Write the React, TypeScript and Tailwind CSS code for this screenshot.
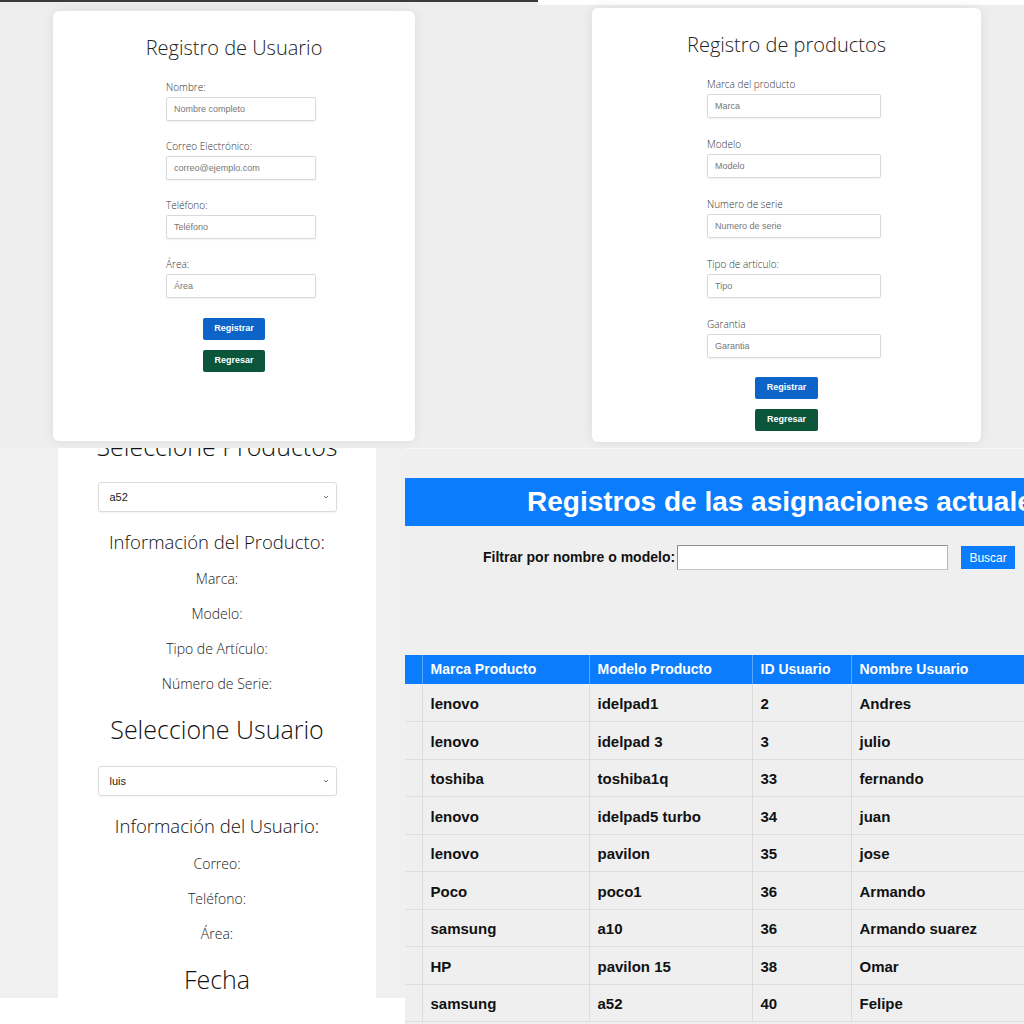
import React from "react";

const sans = { fontFamily: '"Open Sans", "Noto Sans", sans-serif' };
const arial = { fontFamily: '"Liberation Sans", Arial, sans-serif' };

function Field({ label, placeholder, width, first, gap }: { label: string; placeholder: string; width: string; first?: boolean; gap: string }) {
  return (
    <div className={first ? "" : gap}>
      <div className="h-[15px] text-[10px] leading-[15px] font-light text-[#333]" style={sans}>
        {label}
      </div>
      <input
        readOnly
        placeholder={placeholder}
        className={`mt-[2px] block h-[24px] ${width} rounded-[2px] border border-[#d9d9d9] bg-white px-[7px] text-[9px] text-[#333] placeholder:text-[#777] shadow-[0_1px_2px_rgba(0,0,0,0.06)] outline-none`}
        style={arial}
      />
    </div>
  );
}

function Buttons({ w }: { w: string }) {
  return (
    <div className="flex flex-col items-center">
      <button className={`h-[22px] ${w} rounded-[2px] bg-[#0c64c9] text-[9px] font-bold text-white`} style={arial}>
        Registrar
      </button>
      <button className={`mt-[10px] h-[22px] ${w} rounded-[2px] bg-[#0b553a] text-[9px] font-bold text-white`} style={arial}>
        Regresar
      </button>
    </div>
  );
}

function SelectBox({ value }: { value: string }) {
  return (
    <div
      className="mx-auto flex h-[30px] w-[239px] items-center justify-between rounded-[3px] border border-[#dcdcdc] bg-white pl-[11px] pr-[6px] text-[11px] text-[#222] shadow-[0_1px_2px_rgba(0,0,0,0.05)]"
      style={arial}
    >
      <span>{value}</span>
      <svg width="8" height="8" viewBox="0 0 8 8" fill="none">
        <path d="M2 3l2 2 2-2" stroke="#666" strokeWidth="0.9" />
      </svg>
    </div>
  );
}

function Item({ children }: { children: React.ReactNode }) {
  return (
    <div className="h-[35px] text-center text-[14px] leading-[35px] font-light text-[#222]" style={sans}>
      {children}
    </div>
  );
}

const rows = [
  ["lenovo", "idelpad1", "2", "Andres"],
  ["lenovo", "idelpad 3", "3", "julio"],
  ["toshiba", "toshiba1q", "33", "fernando"],
  ["lenovo", "idelpad5 turbo", "34", "juan"],
  ["lenovo", "pavilon", "35", "jose"],
  ["Poco", "poco1", "36", "Armando"],
  ["samsung", "a10", "36", "Armando suarez"],
  ["HP", "pavilon 15", "38", "Omar"],
  ["samsung", "a52", "40", "Felipe"],
];

export default function App() {
  return (
    <div className="h-[1024px] w-[1024px] overflow-hidden bg-white">
      {/* top row */}
      <div className="flex h-[448px]">
        <div className="flex w-[538px] flex-col bg-[#eeeeee]">
          <div className="h-[2px] bg-[#3b3b3b]" />
          <div className="pl-[53px] pt-[9px]">
            <div className="h-[430px] w-[362px] rounded-[6px] bg-white pt-[23px] shadow-[0_0_12px_rgba(0,0,0,0.08)]">
              <h1 className="text-center text-[20px] leading-[28px] font-light text-[#222]" style={sans}>
                Registro de Usuario
              </h1>
              <div className="mt-[18px] pl-[113px]">
                <Field first gap="mt-[18px]" label="Nombre:" placeholder="Nombre completo" width="w-[150px]" />
                <Field gap="mt-[18px]" label="Correo Electrónico:" placeholder="correo@ejemplo.com" width="w-[150px]" />
                <Field gap="mt-[18px]" label="Teléfono:" placeholder="Teléfono" width="w-[150px]" />
                <Field gap="mt-[18px]" label="Área:" placeholder="Área" width="w-[150px]" />
              </div>
              <div className="mt-[20px]">
                <Buttons w="w-[62px]" />
              </div>
            </div>
          </div>
        </div>
        <div className="flex w-[486px] flex-col bg-[#eeeeee]">
          <div className="h-[5px] bg-white" />
          <div className="pl-[54px] pt-[3px]">
            <div className="h-[434px] w-[389px] rounded-[6px] bg-white pt-[23px] shadow-[0_0_12px_rgba(0,0,0,0.08)]">
              <h1 className="text-center text-[20px] leading-[28px] font-light text-[#222]" style={sans}>
                Registro de productos
              </h1>
              <div className="mt-[18px] pl-[115px]">
                <Field first gap="mt-[19px]" label="Marca del producto" placeholder="Marca" width="w-[174px]" />
                <Field gap="mt-[19px]" label="Modelo" placeholder="Modelo" width="w-[174px]" />
                <Field gap="mt-[19px]" label="Numero de serie" placeholder="Numero de serie" width="w-[174px]" />
                <Field gap="mt-[19px]" label="Tipo de articulo:" placeholder="Tipo" width="w-[174px]" />
                <Field gap="mt-[19px]" label="Garantia" placeholder="Garantia" width="w-[174px]" />
              </div>
              <div className="mt-[19px]">
                <Buttons w="w-[63px]" />
              </div>
            </div>
          </div>
        </div>
      </div>

      {/* bottom row */}
      <div className="flex h-[576px]">
        <div className="flex w-[405px] flex-col">
          <div className="h-[550px] bg-[#f0f0f0] pl-[58px]">
            <div className="h-[550px] w-[318px] overflow-hidden bg-white">
              <div className="mt-[-20px] h-[36px] text-center text-[25px] leading-[36px] font-light whitespace-nowrap text-[#111]" style={sans}>
                Seleccione Productos
              </div>
              <div className="mt-[18px]">
                <SelectBox value="a52" />
              </div>
              <div className="mt-[16px] h-[28px] text-center text-[18.5px] leading-[28px] font-light text-[#111]" style={sans}>
                Información del Producto:
              </div>
              <div className="mt-[5px]">
                <Item>Marca:</Item>
                <Item>Modelo:</Item>
                <Item>Tipo de Artículo:</Item>
                <Item>Número de Serie:</Item>
              </div>
              <div className="mt-[10px] h-[36px] text-center text-[25px] leading-[36px] font-light text-[#111]" style={sans}>
                Seleccione Usuario
              </div>
              <div className="mt-[19px]">
                <SelectBox value="luis" />
              </div>
              <div className="mt-[16px] h-[28px] text-center text-[18.5px] leading-[28px] font-light text-[#111]" style={sans}>
                Información del Usuario:
              </div>
              <div className="mt-[6px]">
                <Item>Correo:</Item>
                <Item>Teléfono:</Item>
                <Item>Área:</Item>
              </div>
              <div className="mt-[10px] h-[36px] text-center text-[25px] leading-[36px] font-light text-[#111]" style={sans}>
                Fecha
              </div>
            </div>
          </div>
          <div className="h-[26px] bg-white" />
        </div>

        <div className="w-[619px] overflow-hidden bg-[#efefef]" style={arial}>
          <div className="h-[30px] border-t border-[#f7f7f7]" />
          <div className="flex h-[48px] items-center bg-[#0a7cfc] pl-[122px]">
            <h2 className="text-[28px] leading-[48px] font-bold whitespace-nowrap text-white">
              Registros de las asignaciones actuales
            </h2>
          </div>
          <div className="mt-[19px] flex h-[25px] items-center pl-[78px]">
            <span className="text-[14px] font-bold text-[#111]">Filtrar por nombre o modelo:</span>
            <input
              readOnly
              className="ml-[2px] h-[25px] w-[271px] border border-t-[#8f8f8f] border-l-[#8f8f8f] border-r-[#b5b5b5] border-b-[#c7c7c7] bg-white outline-none"
            />
            <button className="ml-[13px] h-[23px] w-[54px] bg-[#0a7cfc] text-[12px] text-white">Buscar</button>
          </div>
          <table className="mt-[85px] w-[640px] table-fixed border-collapse">
            <colgroup>
              <col className="w-[17px]" />
              <col className="w-[167px]" />
              <col className="w-[163px]" />
              <col className="w-[99px]" />
              <col className="w-[194px]" />
            </colgroup>
            <thead>
              <tr className="h-[29px] bg-[#0a7cfc] text-left text-[14px] font-bold text-white">
                <th className="border-r border-[#5aa6ff]" />
                <th className="border-r border-[#5aa6ff] px-[8px] font-bold">Marca Producto</th>
                <th className="border-r border-[#5aa6ff] px-[8px] font-bold">Modelo Producto</th>
                <th className="border-r border-[#5aa6ff] px-[8px] font-bold">ID Usuario</th>
                <th className="px-[8px] font-bold">Nombre Usuario</th>
              </tr>
            </thead>
            <tbody>
              {rows.map((r, i) => (
                <tr key={i} className="h-[37.5px] border-b border-[#dedede] text-[15px] font-bold text-[#111]">
                  <td className="border-r border-[#dcdcdc]" />
                  <td className="border-r border-[#dcdcdc] px-[8px] pt-[3px]">{r[0]}</td>
                  <td className="border-r border-[#dcdcdc] px-[8px] pt-[3px]">{r[1]}</td>
                  <td className="border-r border-[#dcdcdc] px-[8px] pt-[3px]">{r[2]}</td>
                  <td className="px-[8px] pt-[3px]">{r[3]}</td>
                </tr>
              ))}
            </tbody>
          </table>
        </div>
      </div>
    </div>
  );
}
